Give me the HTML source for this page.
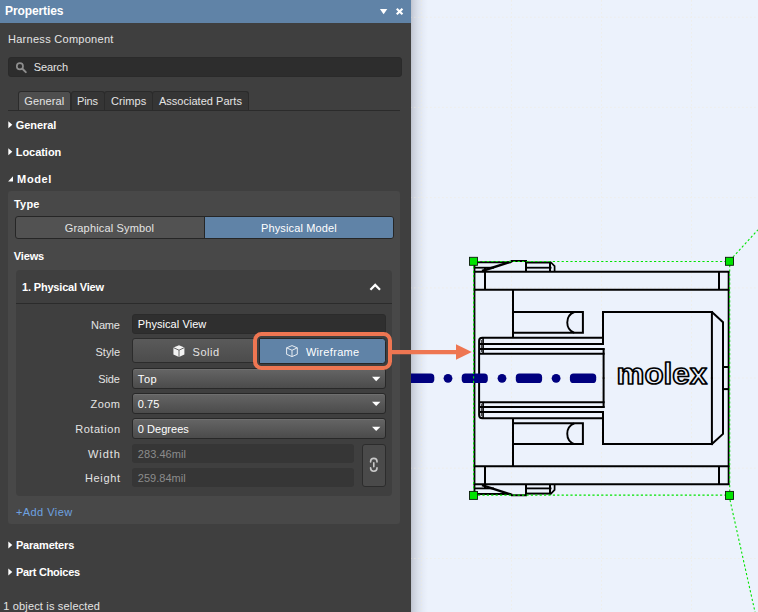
<!DOCTYPE html>
<html><head><meta charset="utf-8">
<title>Properties</title>
<style>
*{box-sizing:border-box;margin:0;padding:0}
html,body{width:758px;height:612px;overflow:hidden;background:#ecf2fc;font-family:"Liberation Sans",sans-serif;font-size:12px;color:#e4e4e4}
#canvas{position:absolute;left:0;top:0;width:758px;height:612px}
#shadow{position:absolute;left:410.5px;top:0;width:14px;height:612px;background:linear-gradient(to right,#aeb2bd 0,#c9cedb 3px,#dde3ee 7px,#e7edf7 11px,#ecf2fc 14px)}
#panel{position:absolute;left:0;top:0;width:410.5px;height:612px;background:#3f3f3f}
#title{position:absolute;left:0;top:0;width:410.5px;height:22.7px;background:#6083a7}
.t{position:absolute;white-space:nowrap;line-height:14px}
.b{font-weight:bold}
.box{position:absolute}
#search{left:8px;top:57px;width:394px;height:19.5px;background:#2d2d2d;border:1px solid #2a2a2a;border-radius:3px}
.tab{position:absolute;top:91px;height:19px;background:#353535;border:1px solid #2b2b2b;border-bottom:none;border-radius:3px 3px 0 0}
.tab.on{background:#4e4e4e}
#tabline{left:8px;top:109.5px;width:392px;height:1px;background:#2b2b2b}
#modelbox{left:8px;top:191px;width:391.8px;height:332.5px;background:#484848;border-radius:3px}
#seg{left:14.5px;top:216px;width:379px;height:22.5px;border:1px solid #262626;border-radius:3px;background:#525252;overflow:hidden}
#segr{position:absolute;left:188.2px;top:0;right:0;bottom:0;background:#6083a7;border-left:1px solid #262626}
#card{left:16px;top:270px;width:376px;height:225.5px;background:#3f3f3f;border-radius:4px}
#cardline{left:16px;top:303px;width:376px;height:1px;background:#2b2b2b}
.inp{position:absolute;background:#2f2f2f;border:1px solid #2b2b2b;border-radius:3px}
.dd{position:absolute;border:1px solid #282828;border-radius:3px;background:linear-gradient(#656565,#4b4b4b);box-shadow:inset 0 1px 0 rgba(255,255,255,.07)}
.dis{position:absolute;background:#363636;border-radius:3px}
.btn{position:absolute;border:1px solid #2c2c2c;border-radius:3px;background:linear-gradient(#5a5a5a,#4c4c4c)}
.btn.blue{background:#6083a7}
#hl{left:252.8px;top:331.9px;width:139.5px;height:38.3px;border:4.2px solid #ee7652;border-radius:8.5px}
svg{position:absolute;left:0;top:0}
</style></head><body>
<div id="canvas">
<svg width="758" height="612" viewBox="0 0 758 612">
<linearGradient id="sh" x1="0" x2="1" y1="0" y2="0">
<stop offset="0" stop-color="#b9bec9"/><stop offset="0.18" stop-color="#cbd0dc"/><stop offset="0.45" stop-color="#dbe1ec"/><stop offset="0.75" stop-color="#e6ecf7"/><stop offset="1" stop-color="#ecf2fc"/>
</linearGradient>
<rect x="410" y="0" width="18" height="612" fill="url(#sh)"/>
<g fill="none" stroke="#f1ecdc" stroke-width="1" stroke-dasharray="1.7 2.3" opacity="0.5">
<path d="M421.4 0V612M511.5 0V612M601.5 0V612M691.5 0V612"/>
<path d="M410 17.3H758M410 107.4H758M410 197.6H758M410 287.9H758M410 378H758M410 468.2H758M410 558.5H758"/>
</g>
<g fill="none" stroke="#000" stroke-width="2" stroke-linecap="butt" stroke-linejoin="miter">
<path d="M473.6 271.8H729.4"/>
<path d="M473.6 289.8H729.4"/>
<path d="M485 268V289.8"/>
<path d="M719 271.8V289.8"/>
<path d="M474 267.7H494" stroke-width="1.8"/>
<path d="M482 271L512 261.3" stroke-width="2.4"/>
<path d="M476 262.2H511M511 260.9H527M526 259.9V271.8"/>
<path d="M526 262.5H551" stroke-width="2"/>
<path d="M526 267.7H551.5" stroke-width="1.8"/>
<path d="M550 261.5V271.8" stroke-width="2"/><path d="M550.5 262L554.6 266.2V271.8" stroke-width="1.7"/>
<path d="M513 289.8V337.8"/>
<path d="M513 312H582.9V332.8H513"/>
<path d="M574.3 312A11.2 11.2 0 0 0 574.3 332.8" stroke-width="1.9"/>
<path d="M479.1 378.5V341Q479.1 337.8 482.4 337.8H604"/>
<path d="M479 344H604"/>
<path d="M479 349H604.6"/>
<path d="M480 353.8H604.6"/>
<path d="M483.1 338V353.8" stroke-width="1.6"/>
<path d="M481.4 340V352" stroke-width="0.8"/>
<path d="M603 344.4V312H711.9"/>
<path d="M603.6 348.2V378.5"/>
<path d="M711.9 311V378.5"/>
<path d="M711.4 311.6L723 322.2V378.5"/>
<path d="M723 367H729"/>
</g>
<g fill="none" stroke="#000" stroke-width="2" stroke-linecap="butt" stroke-linejoin="miter" transform="translate(0 756.1) scale(1 -1)">
<path d="M473.6 271.8H729.4"/>
<path d="M473.6 289.8H729.4"/>
<path d="M485 268V289.8"/>
<path d="M719 271.8V289.8"/>
<path d="M474 267.7H494" stroke-width="1.8"/>
<path d="M482 271L512 261.3" stroke-width="2.4"/>
<path d="M476 262.2H511M511 260.9H527M526 259.9V271.8"/>
<path d="M526 262.5H551" stroke-width="2"/>
<path d="M526 267.7H551.5" stroke-width="1.8"/>
<path d="M550 261.5V271.8" stroke-width="2"/><path d="M550.5 262L554.6 266.2V271.8" stroke-width="1.7"/>
<path d="M513 289.8V337.8"/>
<path d="M513 312H582.9V332.8H513"/>
<path d="M574.3 312A11.2 11.2 0 0 0 574.3 332.8" stroke-width="1.9"/>
<path d="M479.1 378.5V341Q479.1 337.8 482.4 337.8H604"/>
<path d="M479 344H604"/>
<path d="M479 349H604.6"/>
<path d="M480 353.8H604.6"/>
<path d="M483.1 338V353.8" stroke-width="1.6"/>
<path d="M481.4 340V352" stroke-width="0.8"/>
<path d="M603 344.4V312H711.9"/>
<path d="M603.6 348.2V378.5"/>
<path d="M711.9 311V378.5"/>
<path d="M711.4 311.6L723 322.2V378.5"/>
<path d="M723 367H729"/>
</g>
<g fill="none" stroke="#000" stroke-width="1.8">
<path d="M474.5 262V494"/>
<path d="M728.6 271V485"/>
</g>
<text transform="translate(616.6 383.5) scale(1.08 1)" x="0" y="0" font-family="'Liberation Sans',sans-serif" font-weight="bold" font-size="29" fill="#ecf2fc" stroke="#000" stroke-width="1.6" stroke-linejoin="round">molex</text>
<g fill="#00007f">
<rect x="404" y="373.6" width="30.3" height="9.4" rx="3.6"/>
<rect x="461.7" y="373.6" width="26.1" height="9.4" rx="3.6"/>
<rect x="515.8" y="373.6" width="26.3" height="9.4" rx="3.6"/>
<rect x="569.9" y="373.6" width="26.3" height="9.4" rx="3.6"/>
<circle cx="448" cy="378.3" r="4.4"/><circle cx="502" cy="378.3" r="4.4"/><circle cx="556.1" cy="378.3" r="4.4"/>
</g>
<g fill="none" stroke="#00e400" stroke-width="1.1" stroke-dasharray="2.2 2.2">
<path d="M473.6 261.5H729.7V495.1H473.6Z"/>
<path d="M733 257L758 229.8"/>
<path d="M730 500L755 612"/>
</g>
<g fill="#00e400" stroke="#0a1a0a" stroke-width="0.9">
<rect x="469.5" y="257.3" width="8" height="8"/>
<rect x="725.5" y="257.3" width="8" height="8"/>
<rect x="469.5" y="491.4" width="8" height="8"/>
<rect x="725.5" y="491.4" width="8" height="8"/>
</g>

</svg>
</div>
<svg width="758" height="612" viewBox="0 0 758 612" style="pointer-events:none">

</svg>
<div id="panel">
<div id="title"></div>
<div class="box" id="search"></div>
<div class="tab on" style="left:18px;width:53px"></div>
<div class="tab" style="left:70.5px;width:34px"></div>
<div class="tab" style="left:104px;width:48.5px"></div>
<div class="tab" style="left:152px;width:97px"></div>
<div class="box" id="tabline"></div>
<div class="box" id="modelbox"></div>
<div class="box" id="seg"><div id="segr"></div></div>
<div class="box" id="card"></div>
<div class="box" id="cardline"></div>
<div class="inp" style="left:132px;top:314px;width:254px;height:19.5px"></div>
<div class="btn" style="left:132px;top:338.3px;width:124.5px;height:25.2px;border-radius:3px 0 0 3px"></div>
<div class="btn blue" style="left:259px;top:338.1px;width:127px;height:25.6px;border-radius:0 3.5px 3.5px 0;border-color:#262626"></div>
<div class="dd" style="left:132px;top:368.3px;width:254px;height:20.3px"></div>
<div class="dd" style="left:132px;top:393.3px;width:254px;height:20.3px"></div>
<div class="dd" style="left:132px;top:418.3px;width:254px;height:20.3px"></div>
<div class="dis" style="left:132px;top:443.5px;width:222px;height:19px"></div>
<div class="dis" style="left:132px;top:467.5px;width:222px;height:19px"></div>
<div class="btn" style="left:362px;top:443.5px;width:24px;height:43px;background:#4a4a4a"></div>
<div class="box" id="hl"></div>
<svg width="410" height="612" viewBox="0 0 410 612">
<g fill="#fff">
<path d="M379.9 8.9h7.4l-3.7 5.3z"/>
<path d="M396 9.4l1.5-1.5 2.1 2.1 2.1-2.1 1.5 1.5-2.1 2.1 2.1 2.1-1.5 1.5-2.1-2.1-2.1 2.1-1.5-1.5 2.1-2.1z"/>
</g>
<g fill="none" stroke="#8e8e8e" stroke-linecap="round">
<circle cx="19.9" cy="66.2" r="3.1" stroke-width="1.7"/>
<path d="M22.4 68.8l3.4 3.3" stroke-width="2"/>
</g>
<g fill="#fff">
<path d="M8.3 121.3v7l4-3.5z"/>
<path d="M8.3 148.3v7l4-3.5z"/>
<path d="M13 176.2v5.2h-4.9z"/>
<path d="M8.3 541.4v7l4-3.5z"/>
<path d="M8.3 568.6v7l4-3.5z"/>
<path d="M372 376.8h8.4l-4.2 4.4z"/>
<path d="M372 401.7h8.4l-4.2 4.4z"/>
<path d="M372 426.7h8.4l-4.2 4.4z"/>
</g>
<path d="M370.4 289.8l4.8-4.9 4.8 4.9" fill="none" stroke="#fff" stroke-width="2.2"/>
<!-- solid cube -->
<g transform="translate(173,345)">
<path d="M6 0.3L11.4 2.6V9.4L6 11.9L0.4 9.4V2.6Z" fill="#f2f2f2"/>
<path d="M0.4 2.6L6 5.2L11.4 2.6M6 5.2V11.9" fill="none" stroke="#555" stroke-width="0.9"/>
</g>
<!-- wireframe cube -->
<g transform="translate(286,345)" fill="none" stroke="#e6ecf2" stroke-width="1">
<path d="M6 0.6L11.3 2.8V9.3L6 11.6L0.6 9.3V2.8Z"/>
<path d="M0.6 2.8L6 5.3L11.3 2.8M6 5.3V11.6"/>
</g>
<!-- link icon -->
<g fill="none" stroke="#c8c8c8" stroke-width="1.6" stroke-linecap="round">
<path d="M370.6 461.9V461.6a3.2 3.2 0 0 1 6.4 0V461.9"/>
<path d="M370.6 467.7V468a3.2 3.2 0 0 0 6.4 0V467.7"/>
<path d="M373.8 462.8V466.8"/>
</g>

</svg>
<span class="t b" style="left:5.1px;top:4.2px;font-size:12px;letter-spacing:-0.11px;color:#fff">Properties</span>
<span class="t" style="left:8.0px;top:32.1px;font-size:11px;letter-spacing:0.28px;color:#e4e4e4">Harness Component</span>
<span class="t" style="left:33.7px;top:59.9px;font-size:11px;letter-spacing:-0.09px;color:#e4e4e4">Search</span>
<span class="t" style="left:24.3px;top:93.9px;font-size:11px;letter-spacing:0.13px;color:#e4e4e4">General</span>
<span class="t" style="left:77.0px;top:93.9px;font-size:11px;letter-spacing:-0.14px;color:#e4e4e4">Pins</span>
<span class="t" style="left:110.9px;top:93.9px;font-size:11px;letter-spacing:0.09px;color:#e4e4e4">Crimps</span>
<span class="t" style="left:158.9px;top:93.9px;font-size:11px;letter-spacing:0.03px;color:#e4e4e4">Associated Parts</span>
<span class="t b" style="left:15.7px;top:117.9px;font-size:11px;letter-spacing:-0.06px;color:#fff">General</span>
<span class="t b" style="left:15.7px;top:144.9px;font-size:11px;letter-spacing:-0.03px;color:#fff">Location</span>
<span class="t b" style="left:17.1px;top:171.9px;font-size:11px;letter-spacing:0.63px;color:#fff">Model</span>
<span class="t b" style="left:14.0px;top:197.1px;font-size:11px;letter-spacing:0.21px;color:#fff">Type</span>
<span class="t" style="left:64.8px;top:220.7px;font-size:11px;letter-spacing:0.16px;color:#e4e4e4">Graphical Symbol</span>
<span class="t" style="left:260.9px;top:220.7px;font-size:11px;letter-spacing:0.15px;color:#fff">Physical Model</span>
<span class="t b" style="left:13.8px;top:249.0px;font-size:11px;letter-spacing:-0.15px;color:#fff">Views</span>
<span class="t b" style="left:22.1px;top:280.0px;font-size:11px;letter-spacing:-0.19px;color:#fff">1. Physical View</span>
<span class="t" style="left:91.1px;top:317.7px;font-size:11px;letter-spacing:-0.15px;color:#e4e4e4">Name</span>
<span class="t" style="left:137.8px;top:316.8px;font-size:11px;letter-spacing:0.07px;color:#fff">Physical View</span>
<span class="t" style="left:95.5px;top:344.9px;font-size:11px;letter-spacing:0.01px;color:#e4e4e4">Style</span>
<span class="t" style="left:192.6px;top:344.9px;font-size:11px;letter-spacing:0.53px;color:#e4e4e4">Solid</span>
<span class="t" style="left:305.9px;top:344.9px;font-size:11px;letter-spacing:0.32px;color:#fff">Wireframe</span>
<span class="t" style="left:98.2px;top:372.0px;font-size:11px;letter-spacing:-0.08px;color:#e4e4e4">Side</span>
<span class="t" style="left:137.8px;top:372.0px;font-size:11px;letter-spacing:0.58px;color:#fff">Top</span>
<span class="t" style="left:90.5px;top:397.2px;font-size:11px;letter-spacing:0.46px;color:#e4e4e4">Zoom</span>
<span class="t" style="left:137.8px;top:397.2px;font-size:11px;letter-spacing:0.03px;color:#fff">0.75</span>
<span class="t" style="left:75.2px;top:422.2px;font-size:11px;letter-spacing:0.55px;color:#e4e4e4">Rotation</span>
<span class="t" style="left:137.8px;top:422.2px;font-size:11px;letter-spacing:0.04px;color:#fff">0 Degrees</span>
<span class="t" style="left:87.9px;top:446.8px;font-size:11px;letter-spacing:0.99px;color:#e4e4e4">Width</span>
<span class="t" style="left:137.8px;top:446.8px;font-size:11px;letter-spacing:0.06px;color:#8c8c8c">283.46mil</span>
<span class="t" style="left:85.0px;top:471.0px;font-size:11px;letter-spacing:0.64px;color:#e4e4e4">Height</span>
<span class="t" style="left:137.8px;top:471.0px;font-size:11px;letter-spacing:0.02px;color:#8c8c8c">259.84mil</span>
<span class="t" style="left:15.9px;top:505.0px;font-size:11px;letter-spacing:0.45px;color:#6ea2e0">+Add View</span>
<span class="t b" style="left:15.9px;top:537.9px;font-size:11px;letter-spacing:-0.17px;color:#fff">Parameters</span>
<span class="t b" style="left:15.9px;top:565.1px;font-size:11px;letter-spacing:-0.27px;color:#fff">Part Choices</span>
<span class="t" style="left:3.2px;top:598.9px;font-size:11px;letter-spacing:0.17px;color:#e4e4e4">1 object is selected</span>
</div>
<svg width="758" height="612" viewBox="0 0 758 612">
<path d="M391 352.1H458" fill="none" stroke="#ee7652" stroke-width="4.2"/>
<path d="M456 344.2L471.8 352L456 359.8Z" fill="#ee7652"/>

</svg>
</body></html>
